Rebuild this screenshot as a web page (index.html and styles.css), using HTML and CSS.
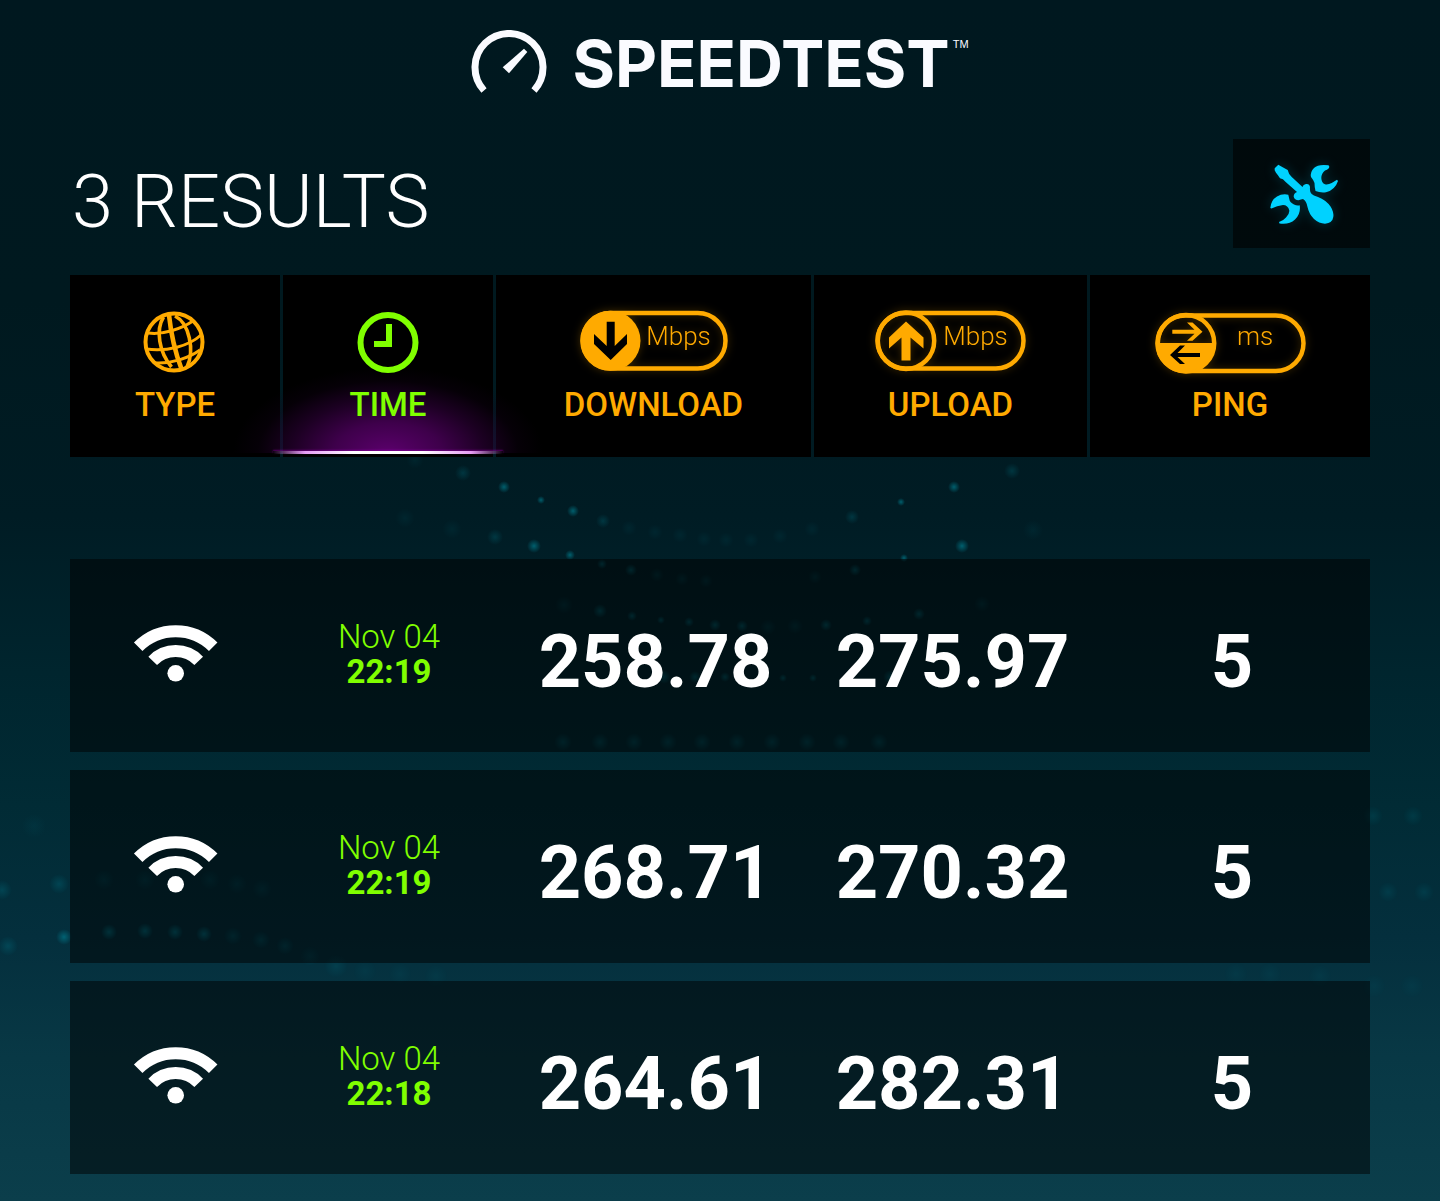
FILE: index.html
```html
<!DOCTYPE html>
<html lang="en">
<head>
<meta charset="utf-8">
<meta name="viewport" content="width=device-width, initial-scale=1">
<title>Speedtest results</title>
<link rel="stylesheet" href="styles.css">
</head>
<body>
<svg class="backdrop" viewBox="0 0 1440 1201" preserveAspectRatio="xMidYMin slice" aria-hidden="true">
  <defs>
    <radialGradient id="dot"><stop offset="0" stop-color="#00a0b4"/><stop offset=".4" stop-color="#00a0b4" stop-opacity=".6"/><stop offset="1" stop-color="#00a0b4" stop-opacity="0"/></radialGradient>
  </defs>
  <g fill="url(#dot)">
    <g opacity=".5"><circle cx="504" cy="487" r="6"/><circle cx="541" cy="500" r="4"/><circle cx="573" cy="511" r="6"/><circle cx="534" cy="546" r="7"/><circle cx="570" cy="555" r="5"/><circle cx="901" cy="502" r="4"/><circle cx="954" cy="487" r="6"/><circle cx="962" cy="546" r="7"/><circle cx="904" cy="558" r="4"/></g>
    <g opacity=".2"><circle cx="463" cy="473" r="8"/><circle cx="603" cy="521" r="7"/><circle cx="495" cy="537" r="8"/><circle cx="852" cy="517" r="7"/><circle cx="1012" cy="471" r="8"/></g>
    <g opacity=".34"><circle cx="602" cy="564" r="5"/><circle cx="631" cy="570" r="6"/><circle cx="855" cy="570" r="6"/><circle cx="600" cy="611" r="7"/><circle cx="632" cy="616" r="5"/><circle cx="661" cy="620" r="4"/><circle cx="689" cy="622" r="5"/><circle cx="715" cy="625" r="6"/><circle cx="742" cy="626" r="6"/><circle cx="826" cy="625" r="6"/><circle cx="867" cy="621" r="5"/><circle cx="919" cy="614" r="6"/><circle cx="664" cy="677" r="7"/><circle cx="695" cy="677" r="6"/><circle cx="725" cy="677" r="5"/><circle cx="783" cy="678" r="4"/><circle cx="813" cy="678" r="4"/><circle cx="890" cy="677" r="7"/></g>
    <g opacity=".07"><circle cx="415" cy="460" r="9"/><circle cx="629" cy="528" r="8"/><circle cx="655" cy="532" r="8"/><circle cx="680" cy="535" r="8"/><circle cx="704" cy="539" r="8"/><circle cx="726" cy="540" r="8"/><circle cx="751" cy="540" r="8"/><circle cx="780" cy="536" r="8"/><circle cx="812" cy="529" r="8"/><circle cx="405" cy="518" r="10"/><circle cx="452" cy="529" r="10"/><circle cx="1033" cy="530" r="10"/></g>
    <g opacity=".13"><circle cx="657" cy="575" r="7"/><circle cx="682" cy="579" r="7"/><circle cx="706" cy="581" r="7"/><circle cx="815" cy="577" r="7"/><circle cx="564" cy="605" r="9"/><circle cx="768" cy="627" r="8"/><circle cx="795" cy="626" r="8"/><circle cx="982" cy="604" r="8"/></g>
    <g opacity=".22"><circle cx="563" cy="742" r="9"/><circle cx="600" cy="742" r="9"/><circle cx="634" cy="742" r="9"/><circle cx="668" cy="742" r="9"/><circle cx="702" cy="742" r="9"/><circle cx="737" cy="742" r="9"/><circle cx="772" cy="742" r="9"/><circle cx="807" cy="742" r="9"/><circle cx="841" cy="742" r="9"/><circle cx="879" cy="742" r="9"/></g>
    <g opacity=".45"><circle cx="64" cy="937" r="8"/><circle cx="109" cy="932" r="8"/><circle cx="145" cy="931" r="8"/><circle cx="175" cy="932" r="8"/><circle cx="204" cy="934" r="8"/></g>
    <g opacity=".2"><circle cx="8" cy="946" r="10"/><circle cx="2" cy="890" r="10"/><circle cx="59" cy="884" r="10"/><circle cx="233" cy="936" r="9"/><circle cx="261" cy="940" r="9"/><circle cx="285" cy="946" r="9"/></g>
    <g opacity=".12"><circle cx="1413" cy="816" r="10"/><circle cx="1373" cy="816" r="10"/><circle cx="1424" cy="892" r="10"/><circle cx="1388" cy="892" r="10"/><circle cx="104" cy="880" r="10"/><circle cx="145" cy="880" r="10"/><circle cx="210" cy="880" r="10"/><circle cx="237" cy="884" r="10"/><circle cx="262" cy="889" r="10"/><circle cx="310" cy="956" r="10"/><circle cx="336" cy="966" r="12"/></g>
    <g opacity=".06"><circle cx="34" cy="826" r="12"/><circle cx="365" cy="971" r="12"/><circle cx="400" cy="974" r="12"/><circle cx="436" cy="976" r="12"/><circle cx="1236" cy="974" r="12"/><circle cx="1270" cy="974" r="12"/><circle cx="1320" cy="976" r="12"/><circle cx="1374" cy="986" r="12"/><circle cx="1412" cy="986" r="12"/></g>
  </g>
</svg>

<header class="brand">
  <svg class="brand-gauge" viewBox="0 0 76 64" aria-hidden="true">
    <path d="M13 60.5A34 34 0 1 1 63 60.5" fill="none" stroke="currentColor" stroke-width="7"/>
    <path d="M53 18.7L56.3 22L38 43.3L31.7 37.3Z" fill="currentColor"/>
  </svg>
  <span class="brand-name">SPEEDTEST</span>
  <span class="brand-mark">TM</span>
</header>

<main class="results">
  <div class="results-head">
    <h1 class="results-title">3 RESULTS</h1>
    <button class="tools" type="button" aria-label="Tools">
      <svg class="tools-icon" viewBox="0 0 72 64" fill="currentColor" aria-hidden="true">
        <path d="M10.300 1.700L14.700 4.300L19.700 7Q20.500 11 23.500 13.700L34.500 24Q35 21.500 38 21Q41.500 20.500 42 24Q41.500 29 43.700 31Q45 32.500 50 34Q58 37 62.700 43.700Q66 49 65.300 54Q64.500 60 57 60.700Q51 60.500 46 56Q41 51 39.500 44Q38.500 38 35 36Q33 36.500 30.500 37.200Q26.500 37 25.700 33.700Q25.700 30 29 28.900L17.700 19Q15 15.500 12 15.300Q10 12 8 9.700Q6 7 6.700 5.300Z"/>
        <path d="M60.500 2.300Q50 1 46 5Q42 9 43 14Q45.500 17 46.500 20Q46.500 24 47.500 28Q52 30 58 29.300Q67 27 70 18L69 16.700L63.700 20Q60 22 57 21.300Q53.500 20 53.300 15Q53.500 10 57 7.500Q61.500 6 61.300 3.500Z"/>
        <path d="M2.300 45Q3 37 9 33.500Q14 30.500 20.300 31.700L21.300 36Q21.500 39 26 41.500Q29 43 31.700 42.300Q33 51 27 56.500Q21 62 11.500 60.500L11 59Q15 58 18 54.500Q21.500 51 21.300 47.500Q20 42 15 42Q9 42.500 3.500 45.500Z"/>
      </svg>
    </button>
  </div>

  <table class="grid">
    <thead>
      <tr class="grid-cols">
        <th scope="col"><button class="sort" type="button">
          <svg class="icon-round" viewBox="1 0 62 64" fill="none" stroke="currentColor" aria-hidden="true">
            <circle cx="31" cy="32" r="28.500" stroke-width="4"/>
            <g stroke-width="3.600"><path d="M20.500 7C12.500 20 16 42 28.500 57"/><path stroke-width="4.600" d="M26 5Q29 34 38.500 59"/><path d="M32 6C46 13 52 40 44 57"/></g>
            <g stroke-width="3"><path d="M5 23C20 25 38 19 50 11"/><path d="M3 39C24 42 46 36 58 25"/><path d="M12 53C28 54 46 48 57 40"/></g>
          </svg>
          <span class="sort-label">TYPE</span></button></th>
        <th scope="col" class="is-sorted" aria-sort="descending"><button class="sort" type="button">
          <svg class="icon-round" viewBox="0 0 62 64" aria-hidden="true">
            <circle cx="31" cy="32.500" r="27.500" fill="none" stroke="currentColor" stroke-width="6"/>
            <path d="M17 31H29V14H35V37H17Z" fill="currentColor"/>
          </svg>
          <span class="sort-label">TIME</span></button></th>
        <th scope="col"><button class="sort" type="button">
          <span class="pill">
            <svg class="pill-art pill-art-short" viewBox="0 0 148 64" aria-hidden="true">
              <rect x="2.500" y="3" width="143" height="55.500" rx="27.700" fill="none" stroke="currentColor" stroke-width="4.500"/>
              <circle cx="30.500" cy="30.700" r="30" fill="currentColor"/>
              <path d="M26.700 11.700H34.700V36L47 24V34L30.700 50L14 34V24L26.700 36Z" fill="#000"/>
            </svg>
            <span class="pill-unit">Mbps</span>
          </span>
          <span class="sort-label">DOWNLOAD</span></button></th>
        <th scope="col"><button class="sort" type="button">
          <span class="pill">
            <svg class="pill-art" viewBox="0 0 151 64" aria-hidden="true">
              <rect x="2.500" y="3" width="146" height="55.500" rx="27.700" fill="none" stroke="currentColor" stroke-width="4.500"/>
              <circle cx="31" cy="30.700" r="28.200" fill="none" stroke="currentColor" stroke-width="4.500"/>
              <path d="M31 11.500L48.500 27.500V38.500L35.500 27.500V50.500H26.500V27.500L14 38.500V27.500Z" fill="currentColor"/>
            </svg>
            <span class="pill-unit">Mbps</span>
          </span>
          <span class="sort-label">UPLOAD</span></button></th>
        <th scope="col"><button class="sort" type="button">
          <span class="pill">
            <svg class="pill-art" viewBox="0 0 151 64" aria-hidden="true">
              <rect x="2.500" y="5.500" width="146" height="55.500" rx="27.700" fill="none" stroke="currentColor" stroke-width="4.500"/>
              <circle cx="31" cy="33.200" r="28.200" fill="none" stroke="currentColor" stroke-width="4.500"/>
              <path d="M3 33H59A28 28 0 0 1 3 33Z" fill="currentColor"/>
              <path d="M17.300 19.700H39.500L32 12.500H37.500L47.500 21.700L37.500 30.700H32L39.500 23.700H17.300Z" fill="currentColor"/>
              <path d="M45 43H22.500L30 35.500H25L15 45L25 54H30L22.500 47H45Z" fill="#000"/>
            </svg>
            <span class="pill-unit">ms</span>
          </span>
          <span class="sort-label">PING</span></button></th>
      </tr>
    </thead>
    <tbody>
      <tr class="grid-cols row">
        <td><svg class="wifi" viewBox="0 0 86 60" role="img" aria-label="Wi-Fi"><g fill="none" stroke="currentColor" stroke-width="12"><path d="M5.200 22.800A53 53 0 0 1 80.200 22.800"/><path d="M19.700 36.800A32 32 0 0 1 65.700 36.800"/></g><circle cx="42.700" cy="49.300" r="8.300" fill="currentColor"/></svg></td>
        <td class="when"><span class="when-date">Nov 04</span><span class="when-time">22:19</span></td>
        <td class="value">258.78</td><td class="value">275.97</td><td class="value">5</td>
      </tr>
      <tr class="grid-cols row">
        <td><svg class="wifi" viewBox="0 0 86 60" role="img" aria-label="Wi-Fi"><g fill="none" stroke="currentColor" stroke-width="12"><path d="M5.200 22.800A53 53 0 0 1 80.200 22.800"/><path d="M19.700 36.800A32 32 0 0 1 65.700 36.800"/></g><circle cx="42.700" cy="49.300" r="8.300" fill="currentColor"/></svg></td>
        <td class="when"><span class="when-date">Nov 04</span><span class="when-time">22:19</span></td>
        <td class="value">268.71</td><td class="value">270.32</td><td class="value">5</td>
      </tr>
      <tr class="grid-cols row">
        <td><svg class="wifi" viewBox="0 0 86 60" role="img" aria-label="Wi-Fi"><g fill="none" stroke="currentColor" stroke-width="12"><path d="M5.200 22.800A53 53 0 0 1 80.200 22.800"/><path d="M19.700 36.800A32 32 0 0 1 65.700 36.800"/></g><circle cx="42.700" cy="49.300" r="8.300" fill="currentColor"/></svg></td>
        <td class="when"><span class="when-date">Nov 04</span><span class="when-time">22:18</span></td>
        <td class="value">264.61</td><td class="value">282.31</td><td class="value">5</td>
      </tr>
    </tbody>
  </table>
</main>
</body>
</html>
```
FILE: styles.css
```css
* {
  box-sizing: border-box;
}

body {
  margin: 0;
  min-height: 100vh;
  position: relative;
  isolation: isolate;
  font-family: Roboto, "Liberation Sans", sans-serif;
  color: #fff;
  background: linear-gradient(#00181f 0%, #00191f 25%, #001c24 43%, #00252e 56%, #012b35 67%, #042f3d 78%, #083845 88%, #0b3e4b 100%);
}

button {
  border: 0;
  padding: 0;
  font: inherit;
  color: inherit;
  cursor: pointer;
}

svg {
  display: block;
}

/* Dotted waves behind the page */
.backdrop {
  position: absolute;
  inset: 0;
  width: 100%;
  height: 100%;
  z-index: -1;
}

.brand {
  display: flex;
  justify-content: center;
  align-items: flex-start;
  padding-top: 30px;
  height: 139px;
  color: #fafbff;
}

.brand-gauge {
  width: 76px;
  height: 64px;
  margin-right: 25px;
}

.brand-name {
  font-family: Inter, sans-serif;
  font-size: 65px;
  font-weight: 700;
  line-height: 68px;
}

.brand-mark {
  padding-left: 3px;
  font-family: "Liberation Sans", sans-serif;
  font-size: 11px;
  line-height: 28px;
}

.results {
  padding: 0 70px 27px;
}

.results-head {
  display: flex;
  justify-content: space-between;
  align-items: flex-end;
  margin-bottom: 27px;
}

.results-title {
  margin: 0;
  padding-left: 2px;
  font-size: 74px;
  font-weight: 300;
  line-height: 92px;
}

.tools {
  display: grid;
  place-items: center;
  width: 137px;
  height: 109px;
  padding-left: 4px;
  padding-top: 2px;
  color: #00d2ff;
  background: rgba(0, 0, 0, 0.6);
}

.tools-icon {
  width: 72px;
  height: 64px;
  filter: drop-shadow(0 0 6px rgba(0, 210, 255, 0.2));
}

.grid,
.grid thead,
.grid tbody {
  display: block;
}

.grid-cols {
  display: grid;
  grid-template-columns: 210fr 210fr 315fr 273fr 280fr;
  column-gap: 3px;
}

.grid th {
  padding: 0;
  font-weight: 400;
}

/* Sortable column headers */
.sort {
  display: flex;
  flex-direction: column;
  align-items: center;
  width: 100%;
  height: 182px;
  padding-top: 35px;
  color: #ffaa00;
  background: #000;
}

.sort-label {
  margin-top: 11px;
  font-size: 33px;
  font-weight: 500;
  line-height: 40px;
}

.icon-round {
  width: 62px;
  height: 64px;
  overflow: visible;
}

.pill {
  display: grid;
  align-items: start;
  filter: drop-shadow(0 0 4px rgba(255, 170, 0, 0.25));
}

.pill-art,
.pill-unit {
  grid-area: 1 / 1;
}

.pill-art {
  width: 151px;
  height: 64px;
}

.pill-art-short {
  width: 148px;
}

.pill-unit {
  padding-left: 50px;
  font-size: 26px;
  font-weight: 300;
  line-height: 52px;
  text-align: center;
}

.is-sorted {
  position: relative;
  z-index: 1;
}

.is-sorted .sort {
  color: #80ff00;
}

.is-sorted .sort > * {
  position: relative;
  z-index: 1;
}

.is-sorted::before,
.is-sorted::after {
  content: "";
  position: absolute;
  pointer-events: none;
}

.is-sorted::before {
  left: -50px;
  right: -50px;
  bottom: 4px;
  height: 86px;
  background: radial-gradient(50% 100% at 50% 100%, rgba(96, 0, 114, 0.95), rgba(78, 0, 94, 0.8) 35%, rgba(52, 0, 64, 0.55) 62%, rgba(22, 0, 28, 0.25) 84%, rgba(10, 0, 12, 0));
}

.is-sorted::after {
  left: -10px;
  right: -10px;
  bottom: 3px;
  height: 3px;
  background: linear-gradient(90deg, transparent, #e79cf5 14%, #fff 35%, #fff 65%, #e79cf5 86%, transparent);
  box-shadow: 0 -1px 2px rgba(190, 0, 220, 0.4);
}

/* Result rows */
.grid tbody {
  margin-top: 102px;
}

.row {
  height: 193px;
  background: rgba(0, 0, 0, 0.5);
}

.row + .row {
  margin-top: 18px;
}

.row td {
  display: flex;
  flex-direction: column;
  align-items: center;
  justify-content: center;
  padding: 0 0 4px 2px;
}

.wifi {
  width: 86px;
  height: 60px;
}

.row .when {
  font-size: 33px;
  line-height: 35px;
  color: #80ff00;
}

.when-date {
  font-weight: 300;
}

.when-time {
  font-weight: 700;
}

.row .value {
  padding: 13px 0 0 4px;
  font-size: 74px;
  font-weight: 700;
  line-height: 88px;
}
```
